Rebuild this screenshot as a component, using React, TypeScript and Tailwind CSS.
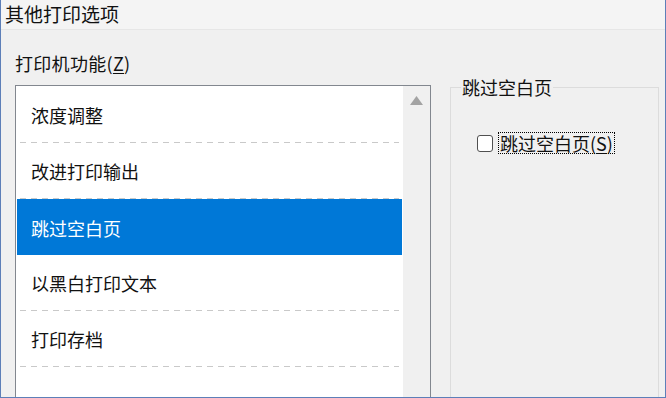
import { useState } from "react";

const options = ["浓度调整", "改进打印输出", "跳过空白页", "以黑白打印文本", "打印存档"];

function App() {
  const [selected, setSelected] = useState(2);
  const [skipBlank, setSkipBlank] = useState(false);

  return (
    <div className="w-[666px] h-[398px] overflow-hidden bg-[#f0f0f0] border-x border-b border-[#5d7fb8] font-['Noto_Sans_CJK_SC','Noto_Sans_CJK_JP',sans-serif] text-[#111]">
      <div className="h-[30px] pl-[4px] bg-[#f4f4f4] border-b border-[#e6e6e6] text-[19px] leading-[28px]">
        其他打印选项
      </div>

      <div className="flex">
        <div className="w-[430px] pl-[14px]">
          <div className="pt-[21px] mb-[10px] text-[18px] leading-[24px] tracking-[0.3px]">
            打印机功能(<span className="underline underline-offset-2">Z</span>)
          </div>
          <div className="flex h-[330px] border border-[#82878f] bg-white">
            <div className="flex-1 px-px pt-px">
              {options.map((opt, i) => (
                <div
                  key={opt}
                  onClick={() => setSelected(i)}
                  className={
                    i === selected
                      ? "h-[56px] flex flex-col bg-[#0078d7] text-white"
                      : "h-[56px] flex flex-col"
                  }
                >
                  <div className="flex-1 flex items-center pl-[14px] pt-[2px] text-[18px]">{opt}</div>
                  {i !== selected && (
                    <div className="mx-[3px] h-px bg-[linear-gradient(to_right,#c9c9c9_6px,transparent_6px)] bg-[length:11px_1px] bg-repeat-x" />
                  )}
                </div>
              ))}
            </div>
            <div className="w-[27px] bg-[#f0f0f0] flex justify-center pt-[10px]">
              <svg width="13" height="9" viewBox="0 0 13 9">
                <path d="M6.5 0 L13 9 L0 9 Z" fill="#a3a3a3" />
              </svg>
            </div>
          </div>
        </div>

        <div className="pl-[19px] pt-[45px]">
          <fieldset className="w-[209px] h-[330px] border border-[#dcdcdc]">
            <legend className="ml-[10px] px-px text-[18px] leading-[24px]">跳过空白页</legend>
            <label className="mt-[33px] ml-[26px] flex items-center cursor-pointer">
              <input
                type="checkbox"
                checked={skipBlank}
                onChange={(e) => setSkipBlank(e.target.checked)}
                className="appearance-none w-[16px] h-[17px] rounded-[3px] border border-[#505050] bg-white checked:bg-[#0078d7]"
              />
              <span className="ml-[5px] px-px border border-dotted border-black text-[18px] leading-[20px]">
                跳过空白页(<span className="underline underline-offset-2">S</span>)
              </span>
            </label>
          </fieldset>
        </div>
      </div>
    </div>
  );
}

export default App;
